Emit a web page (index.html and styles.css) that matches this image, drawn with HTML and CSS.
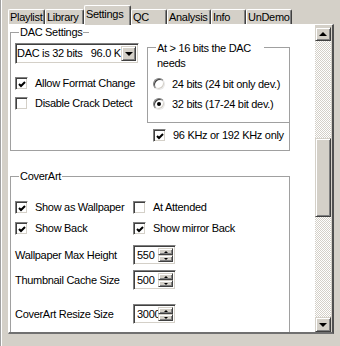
FILE: index.html
```html
<!DOCTYPE html>
<html>
<head>
  <title>Settings</title>
  <link rel="stylesheet" href="styles.css">
</head>
<body>
  <div class="window">
    <div class="tabs">
      <div class="tab tab-playlist">Playlist</div>
      <div class="tab tab-library">Library</div>
      <div class="tab tab-settings active">Settings</div>
      <div class="tab tab-qc">QC</div>
      <div class="tab tab-analysis">Analysis</div>
      <div class="tab tab-info">Info</div>
      <div class="tab tab-undemo">UnDemo</div>
    </div>

    <div class="page">
      <div class="content">

        <div class="dac">
          <div class="dac-left">
            <div class="caption-line"><span class="caption">DAC Settings</span></div>
            <div class="combo">
              <span class="combo-text">DAC is 32 bits   96.0 KHz</span>
              <span class="combo-btn"><span class="arrow-down"></span></span>
            </div>
            <div class="row row-first">
              <span class="box"><svg viewBox="0 0 9 9" width="9" height="9"><polyline points="1,4 3,6 7,2" fill="none" stroke="#000" stroke-width="2"/></svg></span>
              Allow Format Change
            </div>
            <div class="row">
              <span class="box"></span>
              Disable Crack Detect
            </div>
          </div>

          <div class="dac-right">
            <div class="bits">
              <span class="caption caption-wrap">At &gt; 16 bits the DAC needs</span>
              <div class="row row-radio">
                <span class="radio"></span>
                24 bits (24 bit only dev.)
              </div>
              <div class="row">
                <span class="radio on"></span>
                32 bits (17-24 bit dev.)
              </div>
            </div>
            <div class="khz">
              <div class="row">
                <span class="box"><svg viewBox="0 0 9 9" width="9" height="9"><polyline points="1,4 3,6 7,2" fill="none" stroke="#000" stroke-width="2"/></svg></span>
                96 KHz or 192 KHz only
              </div>
            </div>
          </div>
        </div>

        <div class="cover">
          <span class="caption">CoverArt</span>
          <div class="cover-grid">
            <div class="row">
              <span class="box"><svg viewBox="0 0 9 9" width="9" height="9"><polyline points="1,4 3,6 7,2" fill="none" stroke="#000" stroke-width="2"/></svg></span>
              Show as Wallpaper
            </div>
            <div class="row">
              <span class="box"></span>
              At Attended
            </div>
            <div class="row">
              <span class="box"><svg viewBox="0 0 9 9" width="9" height="9"><polyline points="1,4 3,6 7,2" fill="none" stroke="#000" stroke-width="2"/></svg></span>
              Show Back
            </div>
            <div class="row">
              <span class="box"><svg viewBox="0 0 9 9" width="9" height="9"><polyline points="1,4 3,6 7,2" fill="none" stroke="#000" stroke-width="2"/></svg></span>
              Show mirror Back
            </div>

            <div class="field field-1">Wallpaper Max Height</div>
            <div class="field field-1">
              <div class="spin"><span class="spin-text">550</span><span class="spin-btns"><span class="spin-btn"><span class="tri-up"></span></span><span class="spin-btn"><span class="tri-down"></span></span></span></div>
            </div>
            <div class="field field-2">Thumbnail Cache Size</div>
            <div class="field field-2">
              <div class="spin"><span class="spin-text">500</span><span class="spin-btns"><span class="spin-btn"><span class="tri-up"></span></span><span class="spin-btn"><span class="tri-down"></span></span></span></div>
            </div>
            <div class="field field-3">CoverArt Resize Size</div>
            <div class="field field-3">
              <div class="spin"><span class="spin-text">3000</span><span class="spin-btns"><span class="spin-btn"><span class="tri-up"></span></span><span class="spin-btn"><span class="tri-down"></span></span></span></div>
            </div>

            <div class="row row-last">
              <span class="box"></span>
            </div>
            <div class="row row-last">
              <span class="box"></span>
            </div>
          </div>
        </div>

      </div>

      <div class="scrollbar">
        <div class="sb-btn sb-up"><span class="arrow-up"></span></div>
        <div class="track">
          <div class="thumb"></div>
        </div>
        <div class="sb-btn sb-down"><span class="arrow-down"></span></div>
      </div>
    </div>
  </div>
</body>
</html>
```

FILE: styles.css
```css
body {
  margin: 0;
  background: #d4d0c8;
  font: 11px/13px "Liberation Sans", Arial, sans-serif;
  letter-spacing: -0.3px;
  color: #000;
}
.window {
  height: 346px;
  box-sizing: border-box;
  border-left: 1px solid #a0a0a0;
  box-shadow: inset 1px 0 #fff;
}

/* tabs */
.tabs {
  display: flex;
  align-items: flex-end;
  height: 24px;
  padding-left: 7px;
}
.tab {
  box-sizing: border-box;
  height: 15px;
  padding: 1px 0 0 1px;
  border-top: 1px solid #fff;
  border-left: 1px solid #fff;
  border-right: 1px solid #404040;
  box-shadow: inset -1px 0 #808080;
  border-radius: 2px 2px 0 0;
  white-space: nowrap;
  overflow: hidden;
}
.tab.active {
  height: 20px;
  margin-bottom: -1px;
  padding-top: 2px;
  position: relative;
  background: #d4d0c8;
}
.tab-playlist { width: 37px; }
.tab-library { width: 39px; }
.tab-settings { width: 47px; }
.tab-qc { width: 36px; }
.tab-analysis { width: 44px; }
.tab-info { width: 35px; }
.tab-undemo { width: 46px; }

/* page */
.page {
  margin-left: 7px;
  width: 326px;
  box-sizing: border-box;
  display: flex;
  border-top: 1px solid #fff;
  border-left: 1px solid #fff;
  border-right: 2px solid #505050;
  border-bottom: 2px solid #707070;
}
.content {
  width: 306px;
  height: 307px;
  background: #fff;
  overflow: hidden;
}

/* group boxes */
.caption {
  display: inline-block;
  background: #fff;
  padding: 0 1px;
  margin: -7px 0 0 8px;
  vertical-align: top;
}
.caption-line {
  box-sizing: border-box;
  width: 78px;
  height: 11px;
  border-top: 1px solid #a0a0a0;
}
.dac {
  display: flex;
  box-sizing: border-box;
  width: 280px;
  height: 119px;
  margin: 7px 0 0 1px;
  border-left: 1px solid #a0a0a0;
  border-bottom: 1px solid #a0a0a0;
}
.dac-left {
  width: 136px;
}
.dac-right {
  flex: 1;
  margin-top: 15px;
  border-right: 1px solid #a0a0a0;
}
.bits {
  box-sizing: border-box;
  height: 76px;
  padding-left: 5px;
  border-top: 1px solid #a0a0a0;
  border-left: 1px solid #a0a0a0;
  border-bottom: 1px solid #a0a0a0;
}
.caption-wrap {
  width: 106px;
  line-height: 15px;
  margin-left: 3px;
}
.khz {
  height: 27px;
  padding: 2px 0 0 6px;
  box-sizing: border-box;
}
.cover {
  box-sizing: border-box;
  width: 280px;
  height: 200px;
  margin: 25px 0 0 1px;
  border-top: 1px solid #a0a0a0;
  border-left: 1px solid #a0a0a0;
  border-right: 1px solid #a0a0a0;
}
.cover-grid {
  display: grid;
  grid-template-columns: 118px 1fr;
  padding-left: 4px;
  margin-top: 7px;
}

/* controls */
.row {
  display: flex;
  align-items: center;
  height: 20px;
  white-space: nowrap;
}
.cover-grid .row { height: 21px; }
.row-first { margin-top: 9px; }
.row-radio { margin-top: 3px; }
.dac-left .row { padding-left: 4px; }
.box {
  box-sizing: border-box;
  width: 13px;
  height: 13px;
  margin-right: 7px;
  padding: 2px;
  background: #fff;
  border: 1px solid;
  border-color: #808080 #fff #fff #808080;
  box-shadow: inset 1px 1px #404040, inset -1px -1px #d4d0c8;
}
.box svg { display: block; }
.radio {
  box-sizing: border-box;
  width: 12px;
  height: 12px;
  margin-right: 7px;
  border-radius: 50%;
  border: 1px solid;
  border-color: #808080 #e8e8e8 #e8e8e8 #808080;
  box-shadow: inset 1px 1px #404040, inset -1px -1px #d4d0c8;
  display: flex;
  align-items: center;
  justify-content: center;
}
.radio.on::after {
  content: "";
  width: 4px;
  height: 4px;
  border-radius: 50%;
  background: #000;
}
.combo {
  display: flex;
  box-sizing: border-box;
  width: 124px;
  height: 21px;
  margin-left: 4px;
  padding: 2px;
  border: 1px solid;
  border-color: #808080 #fff #fff #808080;
  box-shadow: inset 1px 1px #404040, inset -1px -1px #d4d0c8;
}
.combo-text {
  flex: 1;
  overflow: hidden;
  white-space: pre;
  line-height: 15px;
  margin-left: -1px;
}
.combo-btn,
.sb-btn,
.spin-btn,
.thumb {
  box-sizing: border-box;
  background: #d4d0c8;
  border: 1px solid;
  border-color: #d4d0c8 #404040 #404040 #d4d0c8;
  box-shadow: inset 1px 1px #fff, inset -1px -1px #808080;
  display: flex;
  align-items: center;
  justify-content: center;
}
.combo-btn { width: 15px; }
.arrow-down,
.arrow-up {
  width: 0;
  height: 0;
  border-left: 4px solid transparent;
  border-right: 4px solid transparent;
}
.arrow-down { border-top: 4px solid #000; }
.arrow-up { border-bottom: 4px solid #000; }

.field {
  display: flex;
  align-items: center;
  height: 20px;
  white-space: nowrap;
}
.field-1 { margin-top: 6px; }
.field-2 { margin-top: 5px; }
.field-3 { margin-top: 14px; }
.row-last { margin-top: 10px; }
.spin {
  display: flex;
  box-sizing: border-box;
  width: 43px;
  height: 20px;
  padding: 2px;
  background: #fff;
  border: 1px solid;
  border-color: #808080 #fff #fff #808080;
  box-shadow: inset 1px 1px #404040, inset -1px -1px #d4d0c8;
}
.spin-text {
  flex: 1;
  overflow: hidden;
  line-height: 15px;
  margin-left: 1px;
}
.spin-btns {
  display: flex;
  flex-direction: column;
  width: 15px;
}
.spin-btn { flex: 1; }
.tri-up,
.tri-down {
  width: 0;
  height: 0;
  border-left: 2px solid transparent;
  border-right: 2px solid transparent;
}
.tri-up { border-bottom: 2px solid #000; }
.tri-down { border-top: 2px solid #000; }

/* scrollbar */
.scrollbar {
  display: flex;
  flex-direction: column;
  width: 16px;
  height: 307px;
  margin-right: 1px;
  padding-top: 2px;
  box-sizing: border-box;
}
.sb-up { height: 14px; }
.sb-down { height: 15px; }
.track {
  flex: 1;
  background: repeating-conic-gradient(#fff 0 25%, #d4d0c8 0 50%) 0 0 / 2px 2px;
}
.thumb {
  height: 79px;
  margin-top: 97px;
}
```
